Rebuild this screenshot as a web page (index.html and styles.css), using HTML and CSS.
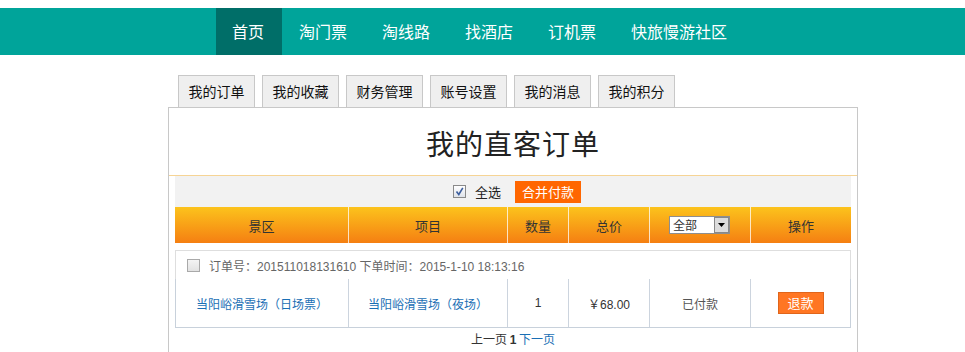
FILE: index.html
```html
<!DOCTYPE html>
<html lang="zh-CN">
<head>
<meta charset="utf-8">
<title>我的直客订单</title>
<link rel="stylesheet" href="styles.css">
</head>
<body>
<div class="nav">
  <ul class="nav-list">
    <li class="nav-item active">首页</li>
    <li class="nav-item">淘门票</li>
    <li class="nav-item">淘线路</li>
    <li class="nav-item">找酒店</li>
    <li class="nav-item">订机票</li>
    <li class="nav-item">快旅慢游社区</li>
  </ul>
</div>

<div class="tabs">
  <span class="tab">我的订单</span>
  <span class="tab">我的收藏</span>
  <span class="tab">财务管理</span>
  <span class="tab">账号设置</span>
  <span class="tab">我的消息</span>
  <span class="tab">我的积分</span>
</div>

<div class="panel">
  <h1 class="title">我的直客订单</h1>
  <div class="content">
    <div class="toolbar">
      <span class="check checked"><svg width="9" height="9" viewBox="0 0 9 9"><path d="M1.5 4.5 L3.8 7.5 L7.8 0.8" fill="none" stroke="#3d5f9e" stroke-width="1.6"/></svg></span>
      <span class="select-all">全选</span>
      <span class="btn-merge">合并付款</span>
    </div>
    <div class="thead">
      <div class="th">景区</div>
      <div class="th">项目</div>
      <div class="th">数量</div>
      <div class="th">总价</div>
      <div class="th"><span class="select"><span class="select-text">全部</span><span class="select-arrow"><svg width="7" height="4" viewBox="0 0 7 4"><path d="M0 0 H7 L3.5 4 Z" fill="#000"/></svg></span></span></div>
      <div class="th">操作</div>
    </div>
    <div class="order">
      <div class="order-info">
        <span class="check"></span>
        <span class="info-text">订单号：201511018131610 下单时间：2015-1-10 18:13:16</span>
      </div>
      <div class="order-row">
        <div class="td"><a class="link">当阳峪滑雪场（日场票）</a></div>
        <div class="td"><a class="link">当阳峪滑雪场（夜场）</a></div>
        <div class="td num">1</div>
        <div class="td num">￥68.00</div>
        <div class="td status">已付款</div>
        <div class="td"><span class="btn-refund">退款</span></div>
      </div>
    </div>
    <div class="pager">上一页 <b>1</b> <a class="link">下一页</a></div>
  </div>
</div>
</body>
</html>
```

FILE: styles.css
```css
html, body {
  margin: 0;
  padding: 0;
  background: #fff;
}
body {
  padding-top: 8px;
  font-family: "Noto Sans CJK SC", "Liberation Sans", sans-serif;
  color: #333;
  overflow: hidden;
  height: 344px;
}
.nav {
  height: 47px;
  background: #00a49a;
}
.nav-list {
  list-style: none;
  margin: 0;
  padding: 0 0 0 216px;
  display: flex;
}
.nav-item {
  height: 47px;
  line-height: 47px;
  padding: 0 18px 0 17px;
  font-size: 16px;
  color: #fff;
}
.nav-item.active {
  padding-left: 16px;
  background: #006e68;
}
.tabs {
  display: flex;
  gap: 7px;
  margin: 20px 0 0 178px;
  height: 32px;
}
.tab {
  box-sizing: border-box;
  height: 32px;
  width: 77px;
  border: 1px solid #c8c8c8;
  border-bottom: none;
  background: #efefef;
  font-size: 14px;
  line-height: 30px;
  text-align: center;
  color: #111;
}
.panel {
  margin-left: 168px;
  width: 688px;
  border: 1px solid #c8c8c8;
  border-bottom: none;
  height: 260px;
}
.title {
  margin: 0;
  height: 67px;
  line-height: 70px;
  border-bottom: 1px solid #f6d495;
  text-align: center;
  font-size: 28px;
  font-weight: normal;
  color: #222;
  letter-spacing: 1px;
}
.content {
  padding: 0 6px;
}
.toolbar {
  height: 31px;
  background: #f2f2f2;
  display: flex;
  align-items: center;
  justify-content: center;
  padding-left: 8px;
}
.check {
  box-sizing: border-box;
  width: 13px;
  height: 13px;
  border: 1px solid #a9a9a9;
  background: linear-gradient(#f4f4f4, #e2e2e2);
  display: inline-flex;
  align-items: center;
  justify-content: center;
}
.check.checked {
  border-color: #8a8a8a;
  background: linear-gradient(#ffffff, #dfe3ea);
}
.select-all {
  font-size: 13px;
  margin: 0 14px 0 9px;
  color: #222;
}
.btn-merge {
  width: 66px;
  height: 22px;
  line-height: 22px;
  text-align: center;
  background: #ff6600;
  color: #fff;
  font-size: 13px;
}
.thead {
  display: grid;
  grid-template-columns: 173px 159px 61px 81px 101px 101px;
  height: 36px;
  background: linear-gradient(#fcc31c, #f57f12);
}
.th {
  display: flex;
  align-items: center;
  justify-content: center;
  font-size: 13px;
  color: #333;
  border-left: 1px solid rgba(255, 255, 255, 0.75);
}
.th:first-child {
  border-left: none;
}
.select {
  box-sizing: border-box;
  width: 61px;
  height: 18px;
  border: 1px solid #8e8e8e;
  background: #fff;
  display: flex;
  margin-right: 1px;
}
.select-text {
  flex: 1;
  font-size: 12px;
  line-height: 16px;
  padding-left: 3px;
  color: #333;
}
.select-arrow {
  width: 15px;
  height: 16px;
  box-sizing: border-box;
  border: 1px solid #888;
  background: #dcdcdc;
  display: flex;
  align-items: center;
  justify-content: center;
}
.order {
  margin-top: 7px;
}
.order-info {
  height: 28px;
  border: 1px solid #dedede;
  border-bottom: none;
  display: flex;
  align-items: center;
  padding-left: 11px;
}
.info-text {
  margin-left: 9px;
  font-size: 12px;
  color: #666;
  font-family: "Liberation Sans", "Noto Sans CJK SC", sans-serif;
}
.order-row {
  display: grid;
  grid-template-columns: 172px 159px 61px 81px 101px 100px;
  height: 48px;
  border: 1px solid #c8d1db;
  border-top: none;
}
.td {
  display: flex;
  align-items: center;
  justify-content: center;
  font-size: 12px;
  color: #333;
  border-left: 1px solid #ccd4de;
}
.td:first-child {
  border-left: none;
}
.num {
  font-family: "Liberation Sans", "Noto Sans CJK SC", sans-serif;
}
.status {
  color: #555;
}
.link {
  color: #1a6fb5;
  text-decoration: none;
}
.btn-refund {
  box-sizing: border-box;
  width: 46px;
  height: 22px;
  line-height: 20px;
  text-align: center;
  background: #ff7623;
  border: 1px solid #e0651b;
  color: #fff;
  font-size: 13px;
}
.pager {
  text-align: center;
  font-size: 12px;
  line-height: 20px;
  color: #333;
  padding-top: 1px;
}
.pager b {
  font-family: "Liberation Sans", sans-serif;
}
```
